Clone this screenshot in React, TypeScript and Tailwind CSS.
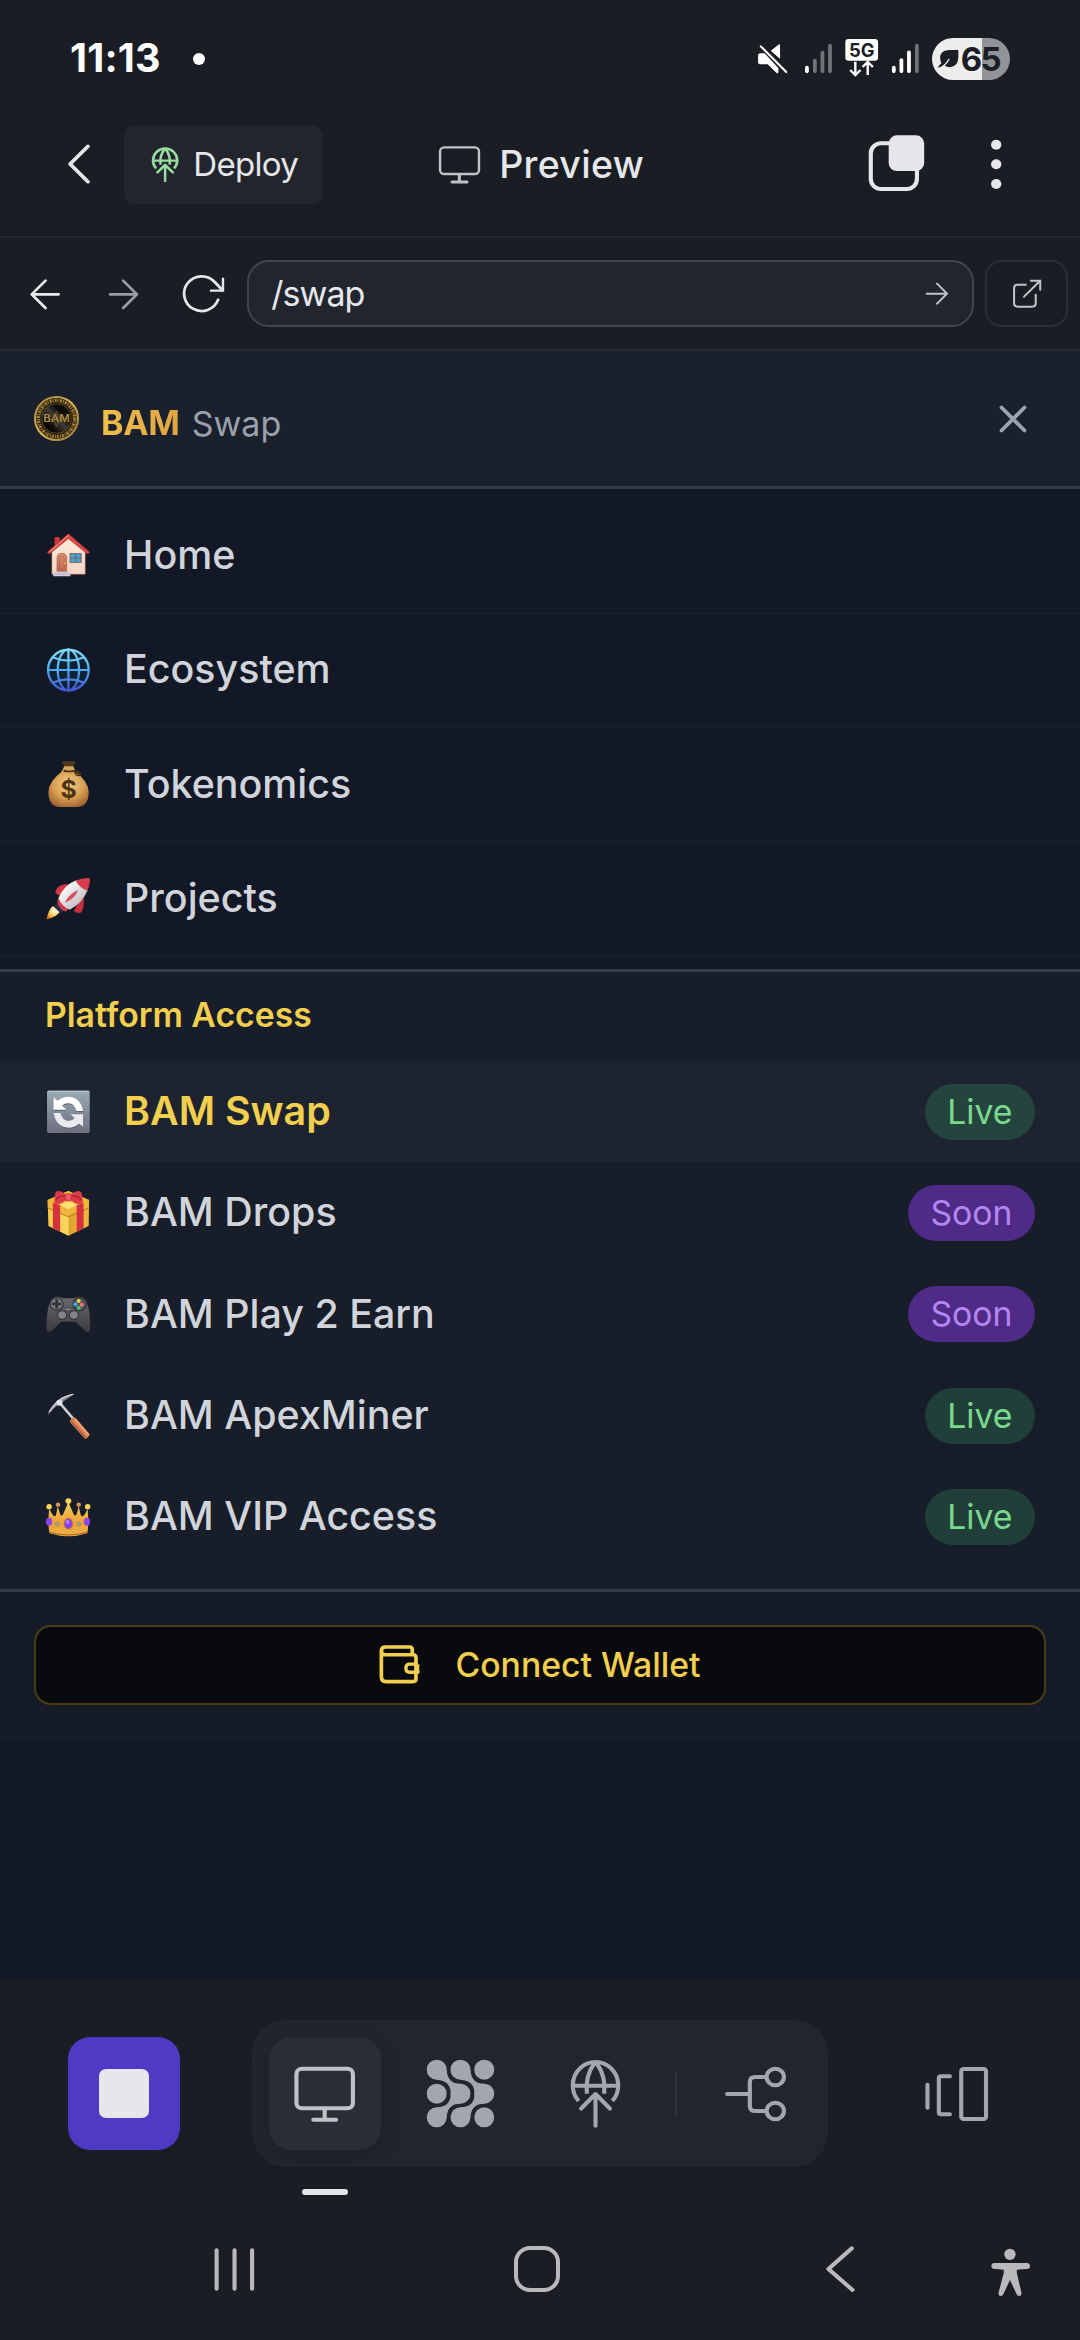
import type { ReactNode } from "react";

/* Drawing units per CSS pixel shared by every glyph on the screen. */
const UX = 1568 / 540;
const UY = 3;

type Box = [number, number, number, number];

function Glyph({ box, className = "", children }: { box: Box; className?: string; children: ReactNode }) {
  return (
    <svg
      viewBox={box.join(" ")}
      preserveAspectRatio="none"
      width={box[2] / UX}
      height={box[3] / UY}
      fill="none"
      className={`shrink-0 ${className}`}
    >
      {children}
    </svg>
  );
}

/* ---------- Status bar ---------- */

function StatusBar() {
  return (
    <div className="flex h-[118px] items-center pr-[70px] pl-[70px] text-white">
      <span className="w-[93px] text-[39.5px] leading-none font-bold tracking-[0.2px]">11:13</span>
      <span className="ml-[30px] size-[12px] rounded-full bg-white" />
      <div className="ml-auto flex items-center">
        <Glyph box={[630, 111, 90, 132]}>
          <path d="M633 166q0-6 7-6h12l40 44v12q0 5-5 3l-26-26h-20q-8 0-8-7z" fill="#fff" />
          <path d="M670 152l22-18q5-3 5 2v38q0 3-3 0z" fill="#fff" />
          <path d="M641 139l74 77" stroke="#fff" strokeWidth="6" strokeLinecap="round" />
        </Glyph>
        <Glyph box={[720, 111, 165, 132]}>
          <g strokeWidth="11" strokeLinecap="round">
            <path d="M775 203v11" stroke="#fff" />
            <path d="M798 182v32M820 158v56M842 137v77" stroke="#727379" />
          </g>
        </Glyph>
        <Glyph box={[885, 111, 97, 132]}>
          <rect x="886" y="117" width="95" height="65" rx="9" fill="#fff" />
          <text x="933.5" y="170" textAnchor="middle" fill="#1b1e25" fontSize="55" fontWeight="700" fontFamily="Inter, sans-serif" textLength="74" lengthAdjust="spacingAndGlyphs">
            5G
          </text>
          <path d="M915 185v40M900 210l15 15 15-15M951 225v-38M936 201l15-15 15 15" stroke="#fff" strokeWidth="7" />
        </Glyph>
        <Glyph box={[982, 111, 155, 132]}>
          <g strokeWidth="11" strokeLinecap="round">
            <path d="M1025 203v11M1047 180v34M1069 157v57" stroke="#fff" />
            <path d="M1092 137v77" stroke="#727379" />
          </g>
        </Glyph>
        <div className="flex h-[42px] w-[78px] items-center overflow-hidden rounded-full bg-[linear-gradient(90deg,#ededee_50px,#929398_50px)] pl-[5px] text-[#1b1e25]">
          <Glyph box={[1152, 147, 66, 60]}>
            <path d="M1214 150h-28q-25 2-25 24 0 8 4 15l-11 13 8 1 11-7q8 6 16 6 25-2 25-30z" fill="#1b1e25" />
            <path d="M1159 205q20-10 28-28" stroke="#ededee" strokeWidth="4" />
          </Glyph>
          <span className="ml-[1px] text-[33px] leading-none font-bold tracking-[-1.6px]">65</span>
        </div>
      </div>
    </div>
  );
}

/* ---------- App chrome ---------- */

function DeployGlobe({ box, stroke, color }: { box: Box; stroke: number; color: string }) {
  return (
    <Glyph box={box}>
      <svg x={box[0]} y={box[1]} width={box[2]} height={box[3]} viewBox="82 266 154 208" preserveAspectRatio="none">
        <g stroke={color} strokeWidth={stroke} strokeLinecap="round" strokeLinejoin="round">
          <path d="M110 392A66 70 0 1 1 208 392" strokeLinecap="butt" />
          <path d="M95 346h129" />
          <path d="M156 278q-28 40-22 92M162 278q28 40 22 92" strokeLinecap="butt" />
          <path d="M159 466v-94M117 415l42-44 42 44" />
        </g>
      </svg>
    </Glyph>
  );
}

function TitleBar() {
  return (
    <header className="flex h-[120px] items-start border-b-2 border-[#26282f] pt-[7px] text-[#e5e7eb]">
      <div className="flex h-[79px] w-full items-center">
        <Glyph box={[194, 428, 70, 127]} className="ml-[67px]">
          <path d="M255 438l-52 53 52 53" stroke="#e5e7eb" strokeWidth="11" strokeLinecap="round" strokeLinejoin="round" />
        </Glyph>
        <div className="ml-[33px] flex h-[79px] w-[199px] items-center rounded-[11px] bg-[#22252d]">
          <div className="ml-[27px]">
            <DeployGlobe box={[438, 439, 82, 106]} stroke={14} color="#98dda0" />
          </div>
          <span className="ml-[14px] text-[33px] leading-none tracking-[-0.7px]">Deploy</span>
        </div>
        <Glyph box={[1272, 434, 125, 120]} className="ml-[115px]">
          <rect x="1278" y="441" width="113" height="80" rx="12" stroke="#c0c2c7" strokeWidth="7" />
          <path d="M1334 523v20" stroke="#c0c2c7" strokeWidth="9" />
          <path d="M1313 545h43" stroke="#c0c2c7" strokeWidth="9" strokeLinecap="round" />
        </Glyph>
        <span className="ml-[18px] text-[37.5px] leading-none font-medium tracking-[0.35px]">Preview</span>
        <Glyph box={[950, 400, 172, 182]} className="ml-auto">
          <rect x="961" y="428" width="134" height="137" rx="30" stroke="#e5e7eb" strokeWidth="12" />
          <rect x="1013" y="404" width="103" height="107" rx="24" fill="#e5e7eb" />
        </Glyph>
        <Glyph box={[1306, 400, 34, 182]} className="mr-[78px] ml-[64px]">
          <circle cx="1324" cy="432" r="15" fill="#e5e7eb" />
          <circle cx="1324" cy="491" r="15" fill="#e5e7eb" />
          <circle cx="1324" cy="550" r="15" fill="#e5e7eb" />
        </Glyph>
      </div>
    </header>
  );
}

function AddressBar() {
  return (
    <div className="flex h-[113px] items-start border-b-2 border-[#26282f] pt-[22px]">
      <div className="flex h-[67px] w-full items-center">
        <Glyph box={[88, 820, 90, 120]} className="ml-[30px]">
          <path d="M171 881H93M133 840l-40 41 40 41" stroke="#e8eaed" strokeWidth="8" strokeLinecap="round" strokeLinejoin="round" />
        </Glyph>
        <Glyph box={[314, 820, 90, 120]} className="ml-[47px]">
          <path d="M320 881h78M358 840l40 41-40 41" stroke="#9a9ca3" strokeWidth="8" strokeLinecap="round" strokeLinejoin="round" />
        </Glyph>
        <Glyph box={[530, 820, 126, 120]} className="ml-[43px]">
          <path d="M635 897A51 52 0 1 1 625 844l22 24" stroke="#e5e7eb" strokeWidth="8" strokeLinecap="round" />
          <path d="M649 834v36h-35" stroke="#e5e7eb" strokeWidth="7" strokeLinecap="round" />
        </Glyph>
        <div className="ml-[22px] flex h-[67px] w-[727px] items-center rounded-[22px] border-2 border-[#42454d] bg-[#22252d] pr-[23px] pl-[22px]">
          <span className="text-[34px] leading-none tracking-[-1px] text-[#e5e7eb]">/swap</span>
          <Glyph box={[1121, 846, 70, 70]} className="ml-auto">
            <path d="M1126 881h59M1156 851l29 30-29 30" stroke="#c0c2c7" strokeWidth="6" strokeLinecap="round" strokeLinejoin="round" />
          </Glyph>
        </div>
        <div className="ml-[11px] flex h-[67px] w-[83px] items-center justify-center rounded-[17px] border-2 border-[#2b2e36]">
          <Glyph box={[1373, 838, 88, 88]}>
            <path d="M1413 855h-24q-10 0-10 10v46q0 10 10 10h43q10 0 10-10v-26" stroke="#c0c2c7" strokeWidth="6" strokeLinecap="round" />
            <path d="M1408 891l46-47M1428 843h27v27" stroke="#c0c2c7" strokeWidth="6" strokeLinecap="round" />
          </Glyph>
        </div>
      </div>
    </div>
  );
}

/* ---------- Menu pictograms ---------- */

function House() {
  return (
    <>
      <defs>
        <linearGradient id="wall" x1="0" y1="0" x2="0" y2="1">
          <stop offset="0" stopColor="#fbefd8" />
          <stop offset="1" stopColor="#f6d3c6" />
        </linearGradient>
        <linearGradient id="door" x1="0" y1="0" x2="0" y2="1">
          <stop offset="0" stopColor="#d9917a" />
          <stop offset="1" stopColor="#c4674f" />
        </linearGradient>
      </defs>
      <path d="M158 596q0-3 3-3h9q3 0 3 3v20l-15 14z" fill="#cb3b3b" />
      <path d="M150 632l48-42 49 42v73H150z" fill="url(#wall)" stroke="#a35f45" strokeWidth="1.5" />
      <path d="M198 583l62 56-7 5-55-46-55 46-7-5z" fill="#d94a47" stroke="#a92a2c" strokeWidth="1.5" />
      <path d="M198 588l-54 49" stroke="#f08b80" strokeWidth="3" />
      <path d="M165 697v-42q0-13 14-13t14 13v42z" fill="url(#door)" stroke="#a85b46" strokeWidth="2" />
      <path d="M172 690v-32q0-9 7-9t7 9v32z" stroke="#b4604a" strokeWidth="2" />
      <circle cx="188" cy="672" r="3" fill="#f2b632" />
      <rect x="203" y="643" width="32" height="26" fill="#35aee6" stroke="#8a5a50" strokeWidth="3" />
      <path d="M219 643v26M203 656h32" stroke="#8a5a50" strokeWidth="3" />
      <path d="M160 697h38v6h6v8h-50v-8h6z" fill="#d3d2e4" />
      <path d="M156 704h46" stroke="#8a8aa5" strokeWidth="1.5" />
    </>
  );
}

function GlobeMeridians() {
  return (
    <>
      <defs>
        <linearGradient id="globe" x1="0" y1="928" x2="0" y2="1056" gradientUnits="userSpaceOnUse">
          <stop offset="0" stopColor="#86e0fb" />
          <stop offset="0.5" stopColor="#4fabf2" />
          <stop offset="1" stopColor="#4353d6" />
        </linearGradient>
      </defs>
      <ellipse cx="198" cy="992" rx="60" ry="62" fill="#0f2233" />
      <g stroke="url(#globe)" strokeWidth="6.5">
        <ellipse cx="198" cy="992" rx="59" ry="61" />
        <ellipse cx="198" cy="992" rx="31" ry="61" />
        <path d="M198.1 930v124M138 992.1h120M152 954q46 20 92 0M152 1030q46-20 92 0" />
      </g>
    </>
  );
}

function MoneyBag() {
  return (
    <>
      <defs>
        <radialGradient id="bag" cx="0.5" cy="0.4" r="0.65">
          <stop offset="0" stopColor="#f0cd86" />
          <stop offset="0.6" stopColor="#d79d52" />
          <stop offset="1" stopColor="#9c6030" />
        </radialGradient>
      </defs>
      <path d="M177 68q21-4 42 0-4 9-8 15h-24q-5-8-10-15z" fill="#51381a" />
      <path d="M182 95q16-8 33 0 42 32 42 64 0 45-35 45h-48q-34 0-34-45 0-32 42-64z" fill="url(#bag)" />
      <path d="M186 82h26l8 16q-22 6-42 0z" fill="#d5a45d" />
      <path d="M184 95q16 5 30 0l8 13q10 4 10-2M214 95q14 4 22 10" stroke="#4a3014" strokeWidth="5" />
      <text x="198.5" y="176" textAnchor="middle" fontFamily="Inter, sans-serif" fontWeight="700" fontSize="72" fill="#4f3212">
        $
      </text>
    </>
  );
}

function Rocket() {
  return (
    <>
      <defs>
        <linearGradient id="hull" x1="0" y1="0" x2="1" y2="1">
          <stop offset="0.2" stopColor="#ffffff" />
          <stop offset="1" stopColor="#a9a4ae" />
        </linearGradient>
        <radialGradient id="flame" cx="0.65" cy="0.3" r="0.8">
          <stop offset="0.2" stopColor="#fff6c8" />
          <stop offset="0.7" stopColor="#f4b740" />
          <stop offset="1" stopColor="#d9762b" />
        </radialGradient>
      </defs>
      <path d="M135 541q5-30 18-40l20 18q-10 16-38 22z" fill="url(#flame)" />
      <path d="M160 462q3-28 44-27l-24 40z" fill="#d33a45" />
      <path d="M214 516q12 10 22 4 12-26 4-56z" fill="#c5303c" />
      <path d="M157 500l14-16 20 24-12 14q-16-8-22-22z" fill="#2c2c50" />
      <path d="M166 482q6-8 10-8l22 30q0 10-8 14-24-10-24-36z" fill="#d53b46" />
      <path d="M169 477q18-40 52-53l33 30q-16 40-52 58-24-10-33-35z" fill="url(#hull)" />
      <path d="M219 425q16-8 38-8 5 0 4 6-2 20-8 32-22-8-34-30z" fill="#d93c4b" />
      <path d="M188 492q8-24 38-39-6 24-38 39z" fill="#d4505c" />
    </>
  );
}

function Refresh() {
  return (
    <>
      <defs>
        <linearGradient id="tile" x1="0" y1="0" x2="0" y2="1">
          <stop offset="0" stopColor="#9aabb3" />
          <stop offset="1" stopColor="#6d6e80" />
        </linearGradient>
      </defs>
      <rect x="136" y="1051" width="124" height="127" rx="5" fill="url(#tile)" />
      <path d="M138 1053h120" stroke="#c0cdd3" strokeWidth="3" />
      <g transform="translate(1 3)" fill="#5a6070">
        <path d="M155 1071l12 10q14-12 31-12 36 2 43 43h-20q-5-22-23-23-12 0-18 7l12 12h-37z" />
        <path d="M241 1159l-12-9q-14 12-31 12-36-2-43-44h20q5 22 23 24 12 0 18-8l-12-12h37z" />
      </g>
      <path d="M155 1071l12 10q14-12 31-12 36 2 43 43h-20q-5-22-23-23-12 0-18 7l12 12h-37z" fill="#fff" />
      <path d="M241 1159l-12-9q-14 12-31 12-36-2-43-44h20q5 22 23 24 12 0 18-8l-12-12h37z" fill="#e9e9ee" />
    </>
  );
}

function Gift() {
  return (
    <>
      <defs>
        <linearGradient id="box" x1="0" y1="0" x2="1" y2="0">
          <stop offset="0" stopColor="#f7c747" />
          <stop offset="0.5" stopColor="#f9d65c" />
          <stop offset="0.51" stopColor="#dea02d" />
          <stop offset="1" stopColor="#f0bb3d" />
        </linearGradient>
      </defs>
      <path d="M138 150l60-27 60 27-1 78-59 29-58-29z" fill="url(#box)" />
      <path d="M138 150l60-27 60 27v22l-60 26-60-26z" fill="#f0b63a" />
      <path d="M172 164l26-10 26 10-26 14z" fill="#ffe07a" />
      <path d="M138 174l60 26 60-26" stroke="#c07a22" strokeWidth="3" />
      <path d="M153 158l21 8v79l-21-10zM222 166l20-8v77l-20 10z" fill="#d5303f" />
      <path d="M157 158q0-20 4-32 14-8 30 8l7 4 7-4q16-16 30-8 5 12 5 32-16 10-32-6l-10-4-10 4q-16 16-31 6z" fill="#dd3b48" />
      <path d="M162 150q8-14 26-12M234 150q-8-14-26-12" stroke="#a81e30" strokeWidth="4" />
      <rect x="189" y="131" width="18" height="22" rx="7" fill="#ee5a60" stroke="#b82536" strokeWidth="2" />
    </>
  );
}

function Gamepad() {
  return (
    <>
      <defs>
        <linearGradient id="pad" x1="0" y1="0" x2="0" y2="1">
          <stop offset="0" stopColor="#696b6e" />
          <stop offset="1" stopColor="#3b3a3f" />
        </linearGradient>
      </defs>
      <path d="M146 455q14-20 36-8h32q22-12 36 8 13 30 11 86-3 12-14 4l-28-28h-42l-28 28q-12 8-14-4-2-56 11-86z" fill="url(#pad)" />
      <circle cx="164" cy="464" r="19" fill="#77797c" stroke="#2d2d30" strokeWidth="3" />
      <circle cx="231" cy="464" r="20" fill="#515356" stroke="#2d2d30" strokeWidth="3" />
      <path d="M164 450v28M150 464h28" stroke="#333438" strokeWidth="8" />
      <circle cx="228" cy="455" r="6" fill="#f2d13c" />
      <circle cx="218" cy="465" r="6" fill="#45a5ee" />
      <circle cx="237" cy="466" r="6" fill="#ef6f7f" />
      <circle cx="228" cy="476" r="6" fill="#43c476" />
      <rect x="188" y="476" width="18" height="8" rx="4" fill="#85878a" stroke="#38383b" strokeWidth="2" />
      <circle cx="180" cy="497" r="13" fill="#828387" stroke="#333336" strokeWidth="3" />
      <circle cx="214" cy="497" r="13" fill="#828387" stroke="#333336" strokeWidth="3" />
    </>
  );
}

function Pickaxe() {
  return (
    <>
      <path d="M174 759l38 46" stroke="#a8abb3" strokeWidth="8" />
      <path d="M172 757l38 46" stroke="#e8eaee" strokeWidth="3" />
      <path d="M216 730q-56 6-79 67 14-22 35-36 22-16 44-31z" fill="#8f939c" />
      <path d="M212 732q-46 8-70 54" stroke="#d9dde2" strokeWidth="4" />
      <circle cx="172" cy="757" r="9" fill="#dfe2e6" />
      <path d="M204 808l8-6q4-2 8 2l40 48q0 5-11 14-3 0-5-3l-40-46q-3-5 0-9z" fill="#d98355" />
      <path d="M217 806l39 47" stroke="#efa87c" strokeWidth="5" />
      <path d="M206 812l42 50" stroke="#9c512f" strokeWidth="3" />
    </>
  );
}

function Crown() {
  return (
    <>
      <defs>
        <linearGradient id="gold" x1="0" y1="0" x2="0" y2="1">
          <stop offset="0" stopColor="#f6cf57" />
          <stop offset="0.6" stopColor="#eea13a" />
          <stop offset="1" stopColor="#e9b246" />
        </linearGradient>
      </defs>
      <path d="M142 1075q6 12 14 23 6 0 7-8l4-22 7 24q4 8 9-1l15-36 15 36q5 9 9 1l6-24 5 22q1 8 8 8 8-11 13-23 4 50-1 74-55 18-110 0-5-24-1-74z" fill="url(#gold)" />
      <path d="M142 1146q56 16 112 0" stroke="#a86423" strokeWidth="3" />
      <g fill="#f7d25d">
        <circle cx="142" cy="1069" r="8" />
        <circle cx="168" cy="1063" r="6.5" fill="#dc9457" />
        <circle cx="198" cy="1052" r="8.5" />
        <circle cx="228" cy="1063" r="6.5" fill="#dc9457" />
        <circle cx="254" cy="1069" r="8" />
      </g>
      <ellipse cx="198" cy="1120" rx="12" ry="16" fill="#8a3df0" stroke="#b46f27" strokeWidth="2.5" />
      <ellipse cx="196" cy="1115" rx="5" ry="7" fill="#b27cff" />
      <ellipse cx="142" cy="1114" rx="9" ry="12" fill="#8a45ee" />
      <ellipse cx="252" cy="1114" rx="9" ry="12" fill="#8a45ee" />
      <circle cx="166" cy="1121" r="6" fill="#7fb0a2" stroke="#b98336" strokeWidth="2" />
      <circle cx="229" cy="1121" r="6" fill="#7fb0a2" stroke="#b98336" strokeWidth="2" />
    </>
  );
}

/* ---------- Menu ---------- */

const pages = [
  { label: "Home", cy: 647, icon: <House /> },
  { label: "Ecosystem", cy: 992, icon: <GlobeMeridians /> },
  { label: "Tokenomics", cy: 135, icon: <MoneyBag /> },
  { label: "Projects", cy: 480, icon: <Rocket /> },
];

const platform = [
  { label: "BAM Swap", cy: 1115, icon: <Refresh />, status: "Live", active: true },
  { label: "BAM Drops", cy: 189, icon: <Gift />, status: "Soon" },
  { label: "BAM Play 2 Earn", cy: 494, icon: <Gamepad />, status: "Soon" },
  { label: "BAM ApexMiner", cy: 797, icon: <Pickaxe />, status: "Live" },
  { label: "BAM VIP Access", cy: 1100, icon: <Crown />, status: "Live" },
];

function BrandHeader() {
  return (
    <div className="flex h-[138px] items-center border-b-[3px] border-[#343a48] bg-[#1a202c] pr-[52px] pl-[34px]">
      <svg viewBox="0 0 44 44" className="size-[45px]" fill="none">
        <defs>
          <linearGradient id="rim" x1="0" y1="0" x2="1" y2="1">
            <stop offset="0" stopColor="#a08139" />
            <stop offset="0.5" stopColor="#dcb95c" />
            <stop offset="1" stopColor="#8f7030" />
          </linearGradient>
          <linearGradient id="sheen" x1="0" y1="1" x2="1" y2="0">
            <stop offset="0.25" stopColor="#0a0907" />
            <stop offset="0.5" stopColor="#3c3a36" />
            <stop offset="0.7" stopColor="#0c0b09" />
          </linearGradient>
        </defs>
        <circle cx="22" cy="22" r="21" fill="#2a2110" stroke="url(#rim)" strokeWidth="2" />
        <circle cx="22" cy="22" r="17.8" stroke="#a07e35" strokeWidth="3.4" strokeDasharray="2 0.9 1 1.2" />
        <circle cx="22" cy="22" r="14.5" fill="url(#sheen)" stroke="#6b5424" strokeWidth="0.8" />
        <text x="22" y="25.8" textAnchor="middle" textLength="26" lengthAdjust="spacingAndGlyphs" fontFamily="Inter, sans-serif" fontSize="10" fontWeight="600" fill="#b08c3e">
          BAM
        </text>
        <path d="M22 15l3 7-3 8-3-8z" stroke="#7d632b" strokeWidth="0.8" />
      </svg>
      <div className="ml-[22px] flex items-baseline pt-[8px] leading-none">
        <span className="bg-gradient-to-r from-[#ecc04c] to-[#e2a344] bg-clip-text text-[34px] leading-[44px] font-bold tracking-[-0.3px] text-transparent">BAM</span>
        <span className="relative top-px ml-[12px] text-[34px] text-[#9aa0ae]">Swap</span>
      </div>
      <svg viewBox="0 0 30 30" className="ml-auto size-[30px]" fill="none" stroke="#9ca3b0" strokeWidth="3.8" strokeLinecap="round">
        <path d="M3.5 3.5l23 23M26.5 3.5l-23 23" />
      </svg>
    </div>
  );
}

function Pictogram({ cy, children }: { cy: number; children: ReactNode }) {
  return (
    <Glyph box={[133, cy - 66, 128, 132]} className="overflow-visible">
      {children}
    </Glyph>
  );
}

function StatusPill({ status }: { status: string }) {
  return (
    <span
      className={`flex h-[56px] items-center rounded-full px-[22.5px] text-[33.75px] leading-none ${
        status === "Live" ? "bg-[#4ade80]/18 text-[#7bd88f]" : "bg-[#4f2a86] text-[#b387f2]"
      }`}
    >
      {status}
    </span>
  );
}

function Menu() {
  return (
    <nav className="flex flex-1 flex-col bg-[#121825]">
      <BrandHeader />
      <ul className="pt-[10px] pb-[11.6px]">
        {pages.map((p) => (
          <li key={p.label} className="flex h-[114.6px] items-center gap-[34px] border-b-2 border-[#161c29] pl-[46px] text-[39.4px] leading-none font-medium text-[#d1d5db]">
            <Pictogram cy={p.cy}>{p.icon}</Pictogram>
            <span>{p.label}</span>
          </li>
        ))}
      </ul>
      <section className="h-[620px] border-t-[3px] border-[#343a48] bg-[#181d2a]">
        <h2 className="flex h-[89px] items-center pb-[3px] pl-[45px] text-[33.75px] leading-none font-semibold text-[#f2cf4e]">Platform Access</h2>
        <ul>
          {platform.map((p) => (
            <li
              key={p.label}
              className={`flex h-[101.3px] items-center gap-[34px] pr-[45px] pl-[46px] text-[39.4px] leading-none ${
                p.active ? "bg-[#1d2430] font-semibold text-[#f2cf4e]" : "font-medium text-[#d1d5db]"
              }`}
            >
              <Pictogram cy={p.cy}>{p.icon}</Pictogram>
              <span>{p.label}</span>
              <div className="ml-auto font-normal">
                <StatusPill status={p.status} />
              </div>
            </li>
          ))}
        </ul>
      </section>
      <section className="h-[150px] border-t-[3px] border-[#343a48] bg-[#161b28] px-[34px] pt-[33px]">
        <button className="flex h-[80px] w-full items-center justify-center rounded-[17px] border-2 border-[#4a3d16] bg-[#090a0e] text-[#f2cf4e]">
          <svg viewBox="33 44 122 116" className="h-[39px] w-[41px]" fill="none" stroke="#f2cf4e" strokeWidth="11">
            <path d="M132 68V58q0-8-8-8H52q-11 0-12 11v77q0 15 14 15h80q9 0 9-9V82q0-9-9-9H52q-12 0-12-12" strokeLinejoin="round" />
            <path d="M149 101h-25q-11 0-11 12t11 12h25q-3-12 0-24" strokeWidth="10" strokeLinejoin="round" />
          </svg>
          <span className="ml-[35px] text-[33.75px] leading-none font-medium">Connect Wallet</span>
        </button>
      </section>
    </nav>
  );
}

/* ---------- Bottom bars ---------- */

function Dock() {
  return (
    <div className="flex h-[147px] items-center">
      <div className="ml-[68px] flex h-[113px] w-[112px] items-center justify-center rounded-[22px] bg-[#4f3ac4]">
        <div className="h-[49px] w-[50px] rounded-[7px] bg-[#e5e7eb]" />
      </div>
      <div className="ml-[72px] flex h-[147px] w-[576px] items-center rounded-[34px] bg-[#22252d]">
        <div className="ml-[17px] flex h-[113px] w-[112px] items-center justify-center rounded-[22px] bg-[#2a2d35] shadow-[0_6px_18px_rgba(0,0,0,0.18)]">
          <Glyph box={[851, 284, 184, 174]}>
            <rect x="861" y="295" width="164" height="119" rx="16" stroke="#c0c2c7" strokeWidth="12" />
            <path d="M943 418v26" stroke="#c0c2c7" strokeWidth="12" />
            <path d="M910 448h66" stroke="#c0c2c7" strokeWidth="12" strokeLinecap="round" />
          </Glyph>
        </div>
        <Glyph box={[1232, 264, 206, 214]} className="ml-[44px]">
          <g fill="#a3a6ae">
            <ellipse cx="1266" cy="299" rx="29" ry="30" />
            <ellipse cx="1335" cy="299" rx="29" ry="30" />
            <ellipse cx="1404" cy="299" rx="29" ry="30" />
            <ellipse cx="1266" cy="371" rx="29" ry="30" />
            <ellipse cx="1335" cy="371" rx="29" ry="30" />
            <ellipse cx="1404" cy="371" rx="29" ry="30" />
            <ellipse cx="1266" cy="442" rx="29" ry="30" />
            <ellipse cx="1335" cy="442" rx="29" ry="30" />
            <ellipse cx="1404" cy="442" rx="29" ry="30" />
            <path d="M1295 299q2 42 40 42v60q-38 0-40 41l-29-30q41-2 41-41t-41-42z" />
            <path d="M1364 299q2 42 40 42v60q-38 0-40 41l-29-30q41-2 41-41t-41-42z" />
          </g>
        </Glyph>
        <div className="ml-[73px]">
          <DeployGlobe box={[82, 266, 154, 208]} stroke={12} color="#a3a6ae" />
        </div>
        <div className="ml-[53px] h-[45px] w-[2px] bg-[#30333b]" />
        <Glyph box={[532, 284, 184, 174]} className="ml-[47px]">
          <g stroke="#a3a6ae" strokeWidth="12">
            <path d="M541 371h66" strokeLinecap="round" />
            <path d="M655 320h-32q-16 0-16 16v70q0 16 16 16h32" />
            <circle cx="681" cy="320" r="25" />
            <circle cx="681" cy="422" r="25" />
          </g>
        </Glyph>
      </div>
      <Glyph box={[1112, 284, 196, 174]} className="ml-[95px]">
        <g stroke="#a3a6ae" strokeWidth="12" strokeLinecap="round">
          <path d="M1125 343v69M1190 318h-26q-6 0-6 6v102q0 6 6 6h26" />
          <rect x="1223" y="296" width="72" height="150" rx="7" />
        </g>
      </Glyph>
    </div>
  );
}

function SystemNav() {
  return (
    <div className="mt-[39px] flex h-[70px] items-center">
      <Glyph box={[620, 824, 124, 146]} className="ml-[213px]">
        <path d="M630.5 840v115M682.5 840v115M733.5 840v115" stroke="#b9b9bb" strokeWidth="12" strokeLinecap="round" />
      </Glyph>
      <div className="ml-[258px] size-[46px] rounded-[16px] border-4 border-[#b9b9bb]" />
      <Glyph box={[826, 824, 90, 146]} className="ml-[265px]">
        <path d="M904 834l-68 62 70 63" stroke="#b9b9bb" strokeWidth="12" strokeLinecap="round" strokeLinejoin="round" />
      </Glyph>
      <Glyph box={[1305, 824, 120, 160]} className="ml-[134px]">
        <g fill="#b9b9bb">
          <ellipse cx="1363" cy="861" rx="16.5" ry="17" />
          <path d="M1318 887h94q9 0 9 9t-9 9q-14 1-29 2v10l13 58q2 11-6 11-6 0-8-6l-19-42-19 42q-2 6-8 6-8 0-6-11l15-58v-10q-15-1-27-2-9 0-9-9t9-9z" />
        </g>
      </Glyph>
    </div>
  );
}

export default function App() {
  return (
    <div className="flex h-[2340px] w-[1080px] flex-col overflow-hidden bg-[#1b1d24] font-['Inter',sans-serif]">
      <StatusBar />
      <TitleBar />
      <AddressBar />
      <Menu />
      <footer className="h-[360px] bg-[#1b1d24] pt-[40px]">
        <Dock />
        <div className="mt-[22px] ml-[302px] h-[6px] w-[46px] rounded-full bg-[#e5e7eb]" />
        <SystemNav />
      </footer>
    </div>
  );
}
